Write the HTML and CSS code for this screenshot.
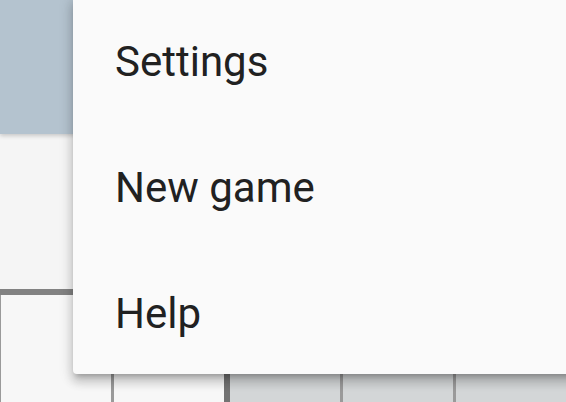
FILE: index.html
```html
<!DOCTYPE html>
<html>
<head>
<meta charset="utf-8">
<link rel="stylesheet" href="styles.css">
</head>
<body>
<div class="screen">
  <header class="appbar"></header>
  <main class="content">
    <div class="board">
      <div class="cell cell-a"></div>
      <div class="cell cell-b"></div>
      <div class="cell cell-c box-edge"></div>
      <div class="cell cell-d"></div>
      <div class="cell cell-e"></div>
    </div>
  </main>
  <nav class="menu">
    <div class="menu-item">Settings</div>
    <div class="menu-item">New game</div>
    <div class="menu-item">Help</div>
  </nav>
</div>
</body>
</html>
```
FILE: styles.css
```css
html, body {
  margin: 0;
  padding: 0;
}
body {
  width: 566px;
  height: 402px;
  overflow: hidden;
  background: #f5f5f5;
  font-family: Roboto, "Noto Sans", sans-serif;
}
.screen {
  position: relative;
  width: 566px;
  height: 402px;
  overflow: hidden;
}
.appbar {
  height: 134px;
  background: #b4c3cf;
  box-shadow: 0 2px 4px rgba(0, 0, 0, 0.18);
  position: relative;
  z-index: 1;
}
.content {
  padding-top: 155px;
}
.board {
  display: flex;
  margin-left: -2px;
  border-top: 6px solid #828282;
}
.cell {
  flex: 0 0 110px;
  height: 110px;
  border-left: 3px solid #9a9a9a;
  background: #f7f7f7;
}
.cell-c, .cell-d, .cell-e {
  background: #d3d6d7;
}
.box-edge {
  border-left: 6px solid #737373;
}
.menu {
  position: absolute;
  top: -4px;
  left: 73px;
  width: 540px;
  background: #fafafa;
  border-radius: 4px;
  box-shadow: 0 5px 5px -3px rgba(0, 0, 0, 0.2), 0 8px 10px 1px rgba(0, 0, 0, 0.14), 0 3px 14px 2px rgba(0, 0, 0, 0.12);
  z-index: 2;
}
.menu-item {
  box-sizing: border-box;
  height: 126px;
  padding: 41px 0 0 42px;
  font-size: 42px;
  line-height: 49px;
  color: #212121;
}
```
